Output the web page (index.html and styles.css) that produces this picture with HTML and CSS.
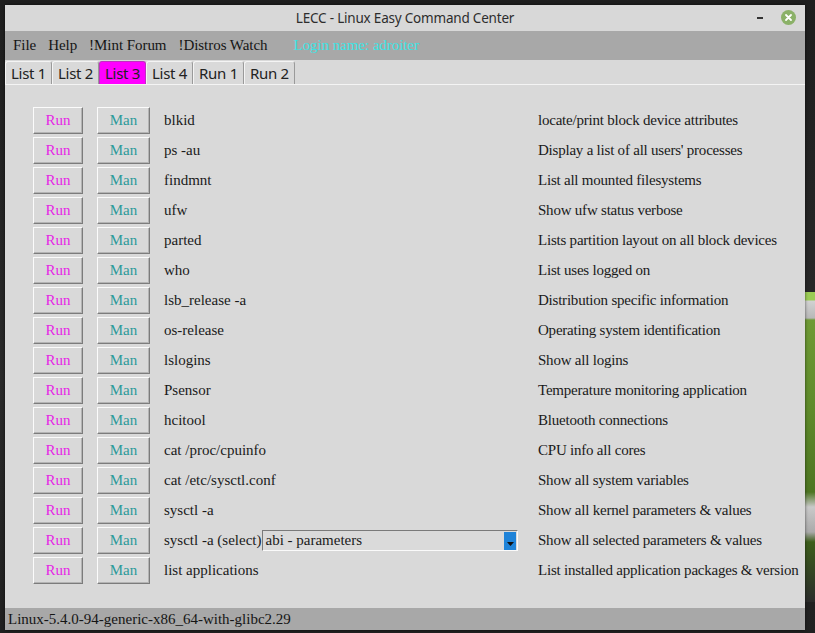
FILE: index.html
```html
<!DOCTYPE html>
<html>
<head>
<meta charset="utf-8">
<title>LECC</title>
<link rel="stylesheet" href="styles.css">
</head>
<body>
<div class="desktop">
  <div class="logo-edge"></div>
  <div class="window">
    <div class="titlebar">
      <span class="title">LECC - Linux Easy Command Center</span>
      <span class="minimize"></span>
      <span class="close"><svg width="15" height="15" viewBox="0 0 15 15"><circle cx="7.5" cy="7.5" r="7.5" fill="#8bb168"/><path d="M5 5 L10 10 M10 5 L5 10" stroke="#fff" stroke-width="1.8" stroke-linecap="round"/></svg></span>
    </div>
    <div class="menubar">
      <span class="menu">File</span>
      <span class="menu">Help</span>
      <span class="menu">!Mint Forum</span>
      <span class="menu">!Distros Watch</span>
      <span class="login">Login name: adroiter</span>
    </div>
    <div class="tabs">
      <span class="tab">List 1</span>
      <span class="tab">List 2</span>
      <span class="tab active">List 3</span>
      <span class="tab">List 4</span>
      <span class="tab">Run 1</span>
      <span class="tab">Run 2</span>
    </div>
    <div class="content">
      <div class="row"><span class="btn run">Run</span><span class="btn man">Man</span><span class="cmd">blkid</span><span class="desc">locate/print block device attributes</span></div>
      <div class="row"><span class="btn run">Run</span><span class="btn man">Man</span><span class="cmd">ps -au</span><span class="desc">Display a list of all users' processes</span></div>
      <div class="row"><span class="btn run">Run</span><span class="btn man">Man</span><span class="cmd">findmnt</span><span class="desc">List all mounted filesystems</span></div>
      <div class="row"><span class="btn run">Run</span><span class="btn man">Man</span><span class="cmd">ufw</span><span class="desc">Show ufw status verbose</span></div>
      <div class="row"><span class="btn run">Run</span><span class="btn man">Man</span><span class="cmd">parted</span><span class="desc">Lists partition layout on all block devices</span></div>
      <div class="row"><span class="btn run">Run</span><span class="btn man">Man</span><span class="cmd">who</span><span class="desc">List uses logged on</span></div>
      <div class="row"><span class="btn run">Run</span><span class="btn man">Man</span><span class="cmd">lsb_release -a</span><span class="desc">Distribution specific information</span></div>
      <div class="row"><span class="btn run">Run</span><span class="btn man">Man</span><span class="cmd">os-release</span><span class="desc">Operating system identification</span></div>
      <div class="row"><span class="btn run">Run</span><span class="btn man">Man</span><span class="cmd">lslogins</span><span class="desc">Show all logins</span></div>
      <div class="row"><span class="btn run">Run</span><span class="btn man">Man</span><span class="cmd">Psensor</span><span class="desc">Temperature monitoring application</span></div>
      <div class="row"><span class="btn run">Run</span><span class="btn man">Man</span><span class="cmd">hcitool</span><span class="desc">Bluetooth connections</span></div>
      <div class="row"><span class="btn run">Run</span><span class="btn man">Man</span><span class="cmd">cat /proc/cpuinfo</span><span class="desc">CPU info all cores</span></div>
      <div class="row"><span class="btn run">Run</span><span class="btn man">Man</span><span class="cmd">cat /etc/sysctl.conf</span><span class="desc">Show all system variables</span></div>
      <div class="row"><span class="btn run">Run</span><span class="btn man">Man</span><span class="cmd">sysctl -a</span><span class="desc">Show all kernel parameters &amp; values</span></div>
      <div class="row"><span class="btn run">Run</span><span class="btn man">Man</span><span class="cmd">sysctl -a (select)<span class="combo"><span class="combo-text">abi - parameters</span><span class="combo-arrow"><svg width="7" height="5" viewBox="0 0 7 5"><path d="M0 0 H7 L3.5 4 Z" fill="#111"/></svg></span></span></span><span class="desc">Show all selected parameters &amp; values</span></div>
      <div class="row"><span class="btn run">Run</span><span class="btn man">Man</span><span class="cmd">list applications</span><span class="desc">List installed application packages &amp; version</span></div>
    </div>
    <div class="statusbar">Linux-5.4.0-94-generic-x86_64-with-glibc2.29</div>
  </div>
</div>
</body>
</html>
```

FILE: styles.css
```css
html, body {
  margin: 0;
  padding: 0;
}
body {
  width: 815px;
  height: 633px;
  overflow: hidden;
  background: #232323;
}
.desktop {
  position: relative;
  width: 815px;
  height: 633px;
  padding: 5px 10px 3px 5px;
  box-sizing: border-box;
  background: linear-gradient(180deg, #1e1e1e 0%, #2a2a2a 60%, #202020 100%);
}
.logo-edge {
  position: absolute;
  left: 803px;
  top: 292px;
  width: 12px;
  height: 310px;
  background: linear-gradient(180deg,
    #9ccc55 0px, #9ccc55 8px,
    #d2d2d2 9px, #b8b8b8 26px,
    #6f9a35 28px, #5e8a2a 120px, #4d7522 200px,
    #c9c9c9 215px, #aaaaaa 240px,
    #3d5e1b 250px, #2b2b2b 310px);
}
.window {
  position: relative;
  width: 800px;
  height: 625px;
  display: flex;
  flex-direction: column;
  background: #d9d9d9;
  box-shadow: 0 0 3px rgba(0,0,0,0.6);
}
.titlebar {
  height: 26px;
  flex: none;
  background: #d8d8d8;
  display: flex;
  align-items: center;
  justify-content: center;
  position: relative;
  font-family: "Noto Sans", "DejaVu Sans", sans-serif;
  font-size: 13.5px;
  color: #2d2d2d;
}
.title {
  letter-spacing: -0.2px;
}
.minimize {
  position: absolute;
  left: 752px;
  top: 12px;
  width: 6px;
  height: 2px;
  background: #333;
}
.close {
  position: absolute;
  left: 776px;
  top: 5px;
  width: 15px;
  height: 15px;
  line-height: 0;
}
.menubar {
  height: 29px;
  flex: none;
  background: #a8a8a8;
  display: flex;
  align-items: center;
  padding-left: 8px;
  font-family: "Liberation Serif", serif;
  font-size: 15px;
  color: #151515;
  letter-spacing: -0.05px;
}
.menu {
  margin-right: 12px;
}
.login {
  margin-left: 14px;
  color: #3ce4e4;
}
.tabs {
  height: 24px;
  flex: none;
  display: flex;
  align-items: flex-end;
  background: #d9d9d9;
  border-bottom: 1px solid #f4f4f4;
  font-family: "Noto Sans", "DejaVu Sans", sans-serif;
  font-size: 15px;
  color: #222;
}
.tab {
  height: 23px;
  box-sizing: border-box;
  padding: 0 5px;
  display: flex;
  align-items: center;
  border: 1px solid #9a9a9a;
  border-bottom: none;
  border-left-color: #f4f4f4;
  border-top-color: #f4f4f4;
  border-radius: 3px 3px 0 0;
  background: #d9d9d9;
  letter-spacing: -0.3px;
}
.tab.active {
  background: #ff00ff;
  border-color: #c030c0;
}
.content {
  flex: 1;
  padding: 22px 0 0 28px;
  display: flex;
  flex-direction: column;
  gap: 3px;
  font-family: "Liberation Serif", serif;
  font-size: 15px;
  color: #1a1a1a;
}
.row {
  height: 27px;
  display: flex;
  align-items: center;
}
.btn {
  height: 27px;
  box-sizing: border-box;
  display: flex;
  align-items: center;
  justify-content: center;
  border: 1px solid;
  border-color: #fbfbfb #7c7c7c #7c7c7c #fbfbfb;
  box-shadow: inset -1px -1px 0 #b4b4b4;
  background: #d9d9d9;
}
.run {
  width: 50px;
  margin-right: 14px;
  color: #e626e6;
}
.man {
  width: 53px;
  margin-right: 14px;
  color: #2c9a9a;
}
.cmd {
  width: 374px;
  flex: none;
  display: flex;
  align-items: center;
  white-space: nowrap;
}
.desc {
  white-space: nowrap;
  letter-spacing: -0.22px;
}
.combo {
  width: 256px;
  height: 21px;
  margin-left: 1px;
  box-sizing: border-box;
  display: flex;
  align-items: center;
  border: 1px solid;
  border-color: #7a7a7a #fafafa #fafafa #7a7a7a;
  background: #dadada;
}
.combo-text {
  flex: 1;
  padding-left: 2px;
}
.combo-arrow {
  width: 12px;
  height: 18px;
  margin-right: 1px;
  background: #1f83d8;
  display: flex;
  align-items: flex-end;
  justify-content: center;
  padding-bottom: 3px;
  box-sizing: border-box;
  line-height: 0;
}
.statusbar {
  height: 22px;
  flex: none;
  background: #a8a8a8;
  display: flex;
  align-items: center;
  padding-left: 3px;
  font-family: "Liberation Serif", serif;
  font-size: 15px;
  color: #151515;
}
```
